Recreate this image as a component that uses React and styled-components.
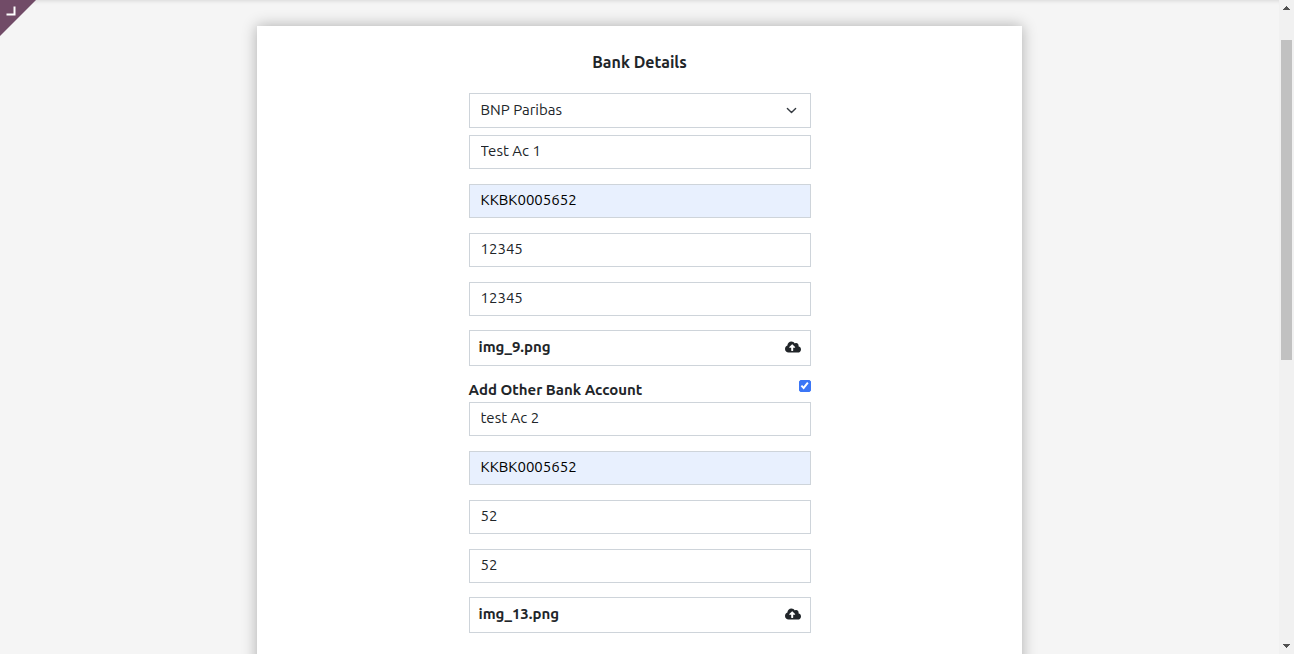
import React, { useState } from "react";
import styled, { createGlobalStyle } from "styled-components";
import { FaCloudUploadAlt } from "react-icons/fa";

const GlobalStyle = createGlobalStyle`
  *, *::before, *::after { box-sizing: border-box; }
  body {
    margin: 0;
    background: #f5f5f5;
    color: #212529;
    font-family: Ubuntu, "Noto Sans", "Open Sans", sans-serif;
    font-size: 15px;
    line-height: 20px;
  }
`;

const Shell = styled.div`
  display: flex;
  height: 100vh;
  overflow: hidden;
`;

const Page = styled.main`
  position: relative;
  flex: 1;
  min-width: 0;
  overflow: hidden;
  padding: 26px 16px 0;
  box-shadow: inset 0 5px 4px -4px rgba(0, 0, 0, 0.12);
`;

const CornerButton = styled.button`
  position: absolute;
  top: 0;
  left: 0;
  width: 36px;
  height: 36px;
  padding: 0;
  border: 0;
  background: #714b67;
  clip-path: polygon(0 0, 100% 0, 0 100%);
  cursor: pointer;

  svg { display: block; }
`;

const Card = styled.section`
  max-width: 765px;
  min-height: 100vh;
  margin: 0 auto;
  padding: 24px 16px;
  background: #fff;
  box-shadow: 0 0 14px rgba(0, 0, 0, 0.3);
`;

const Title = styled.h1`
  margin: 0 0 19px;
  font-size: 16px;
  font-weight: 600;
  line-height: 24px;
  text-align: center;
`;

const Form = styled.form`
  max-width: 342px;
  margin: 0 auto;
`;

const SelectBox = styled.div`
  position: relative;
  margin-bottom: 7px;

  svg {
    position: absolute;
    top: 12px;
    right: 14px;
    pointer-events: none;
  }
`;

const Select = styled.select`
  display: block;
  width: 100%;
  height: 35px;
  padding: 0 36px 2px 11px;
  border: 1px solid #ced4da;
  border-radius: 0;
  background: #fff;
  color: inherit;
  font: inherit;
  appearance: none;
`;

const Fields = styled.div`
  display: grid;
  gap: 15px;
  margin-bottom: 14px;
`;

const Input = styled.input`
  display: block;
  width: 100%;
  height: 34px;
  padding: 0 11px 4px;
  border: 1px solid #ced4da;
  border-radius: 0;
  background: ${({ $filled }) => ($filled ? "#e8f0fe" : "#fff")};
  color: ${({ $filled }) => ($filled ? "#000" : "inherit")};
  font: inherit;
`;

const FileLabel = styled.label`
  display: flex;
  align-items: center;
  justify-content: space-between;
  height: 36px;
  padding: 0 9px 2px;
  border: 1px solid #ced4da;
  font-weight: 700;
  cursor: pointer;
`;

const HiddenFile = styled.input`
  position: absolute;
  width: 1px;
  height: 1px;
  opacity: 0;
`;

const CheckRow = styled.div`
  display: flex;
  justify-content: space-between;
  padding: 14px 0 2px;
`;

const CheckLabel = styled.label`
  font-weight: 700;
`;

const Checkbox = styled.input`
  appearance: none;
  display: grid;
  place-items: center;
  width: 12px;
  height: 12px;
  margin: 0;
  border: 1px solid #3b76f6;
  border-radius: 2px;
  background: #fff;

  &:checked { background: #3b76f6; }

  &:checked::before {
    content: "";
    width: 10px;
    height: 10px;
    background: #fff;
    clip-path: polygon(12% 52%, 26% 39%, 40% 56%, 76% 10%, 91% 22%, 42% 85%);
  }
`;

const ScrollBar = styled.div`
  display: flex;
  flex-direction: column;
  width: 15px;
  background: #f1f1f1;

  svg { display: block; flex: none; }
`;

const Track = styled.div`
  display: grid;
  grid-template-rows: 25fr 320fr 279fr;
  flex: 1;
  padding: 0 2px;
`;

const Thumb = styled.div`
  grid-row: 2;
  background: #c1c1c1;
`;

function Account({ id, holder, code, number, file }) {
  const [fileName, setFileName] = useState(file);
  return (
    <>
      <Fields>
        <Input aria-label="Account holder name" defaultValue={holder} />
        <Input aria-label="IFSC code" defaultValue={code} $filled />
        <Input aria-label="Account number" defaultValue={number} />
        <Input aria-label="Confirm account number" defaultValue={number} />
      </Fields>
      <HiddenFile
        type="file"
        id={id}
        onChange={(e) => e.target.files[0] && setFileName(e.target.files[0].name)}
      />
      <FileLabel htmlFor={id}>
        {fileName}
        <FaCloudUploadAlt size={16} aria-hidden="true" />
      </FileLabel>
    </>
  );
}

export default function App() {
  const [other, setOther] = useState(true);
  return (
    <Shell>
      <GlobalStyle />
      <Page>
        <CornerButton type="button" aria-label="Open editor">
          <svg width="36" height="36" fill="none" stroke="#fff" strokeWidth="2">
            <path d="M6.5 14.5H14.5V6.5" />
          </svg>
        </CornerButton>
        <Card>
          <Title>Bank Details</Title>
          <Form>
            <SelectBox>
              <Select aria-label="Bank" defaultValue="BNP Paribas">
                <option>BNP Paribas</option>
              </Select>
              <svg width="11" height="11" viewBox="0 0 16 16" fill="none" stroke="#343a40" strokeWidth="2" strokeLinecap="round" strokeLinejoin="round">
                <path d="M2 5l6 6 6-6" />
              </svg>
            </SelectBox>
            <Account id="proof-1" holder="Test Ac 1" code="KKBK0005652" number="12345" file="img_9.png" />
            <CheckRow>
              <CheckLabel htmlFor="other-account">Add Other Bank Account</CheckLabel>
              <Checkbox
                type="checkbox"
                id="other-account"
                checked={other}
                onChange={(e) => setOther(e.target.checked)}
              />
            </CheckRow>
            {other && (
              <Account id="proof-2" holder="test Ac 2" code="KKBK0005652" number="52" file="img_13.png" />
            )}
          </Form>
        </Card>
      </Page>
      <ScrollBar aria-hidden="true">
        <svg width="15" height="15" fill="#505050"><path d="M7 6h1v1h1v1h1v1h1v1H4V9h1V8h1V7h1z" /></svg>
        <Track><Thumb /></Track>
        <svg width="15" height="15" fill="#505050"><path d="M4 5h7v1h-1v1H9v1H8v1H7V8H6V7H5V6H4z" /></svg>
      </ScrollBar>
    </Shell>
  );
}
